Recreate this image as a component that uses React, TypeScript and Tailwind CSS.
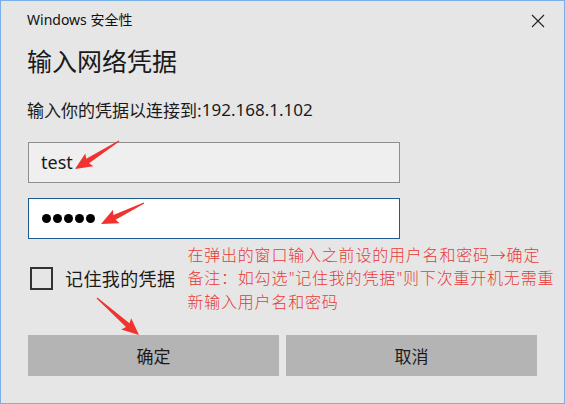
import React from "react";

const ui = { fontFamily: '"Noto Sans", "Noto Sans CJK SC", sans-serif' };
const cjk = { fontFamily: '"Noto Sans CJK SC", "Noto Sans", sans-serif' };

type Pt = [number, number];

function arrowPoints(from: Pt, to: Pt) {
  const dx = to[0] - from[0];
  const dy = to[1] - from[1];
  const len = Math.hypot(dx, dy);
  const ux = dx / len;
  const uy = dy / len;
  const nx = -uy;
  const ny = ux;
  const head = 15;
  const bx = to[0] - ux * head;
  const by = to[1] - uy * head;
  const p = (x: number, y: number, w: number) => `${x + nx * w},${y + ny * w}`;
  return [
    p(from[0], from[1], 0.6),
    p(bx, by, 2.6),
    p(bx - ux * 2, by - uy * 2, 7.5),
    `${to[0]},${to[1]}`,
    p(bx - ux * 2, by - uy * 2, -7.5),
    p(bx, by, -2.6),
    p(from[0], from[1], -0.6),
  ].join(" ");
}

const arrows: [Pt, Pt][] = [
  [[118, 140], [74, 168]],
  [[143, 202], [100, 223]],
  [[96, 297], [138, 334]],
];

function Quote() {
  return <span className="inline-block w-[7px] tracking-normal text-center" style={ui}>"</span>;
}

export default function App() {
  return (
    <div className="relative w-[565px] h-[404px] overflow-hidden border border-[#7ab0e8] bg-[#e6e6e6] text-[#1a1a1a]" style={ui}>
      <div className="flex items-center justify-between h-[38px] pl-[26px] pr-[19px]">
        <span className="text-[14px] leading-none text-[#111]">Windows 安全性</span>
        <svg width="14" height="14" viewBox="0 0 14 14" className="mt-[2px]">
          <path d="M1 1 L13 13 M13 1 L1 13" stroke="#222" strokeWidth="1.1" />
        </svg>
      </div>

      <div className="px-[26px]">
        <h1 className="mt-[4px] h-[34px] flex items-center text-[25px] leading-none" style={cjk}>
          输入网络凭据
        </h1>
        <p className="mt-[21px] h-[22px] flex items-center text-[17px] leading-none">
          <span style={cjk}>输入你的凭据以连接到:</span>192.168.1.102
        </p>

        <div className="mt-[22px] ml-[1px] w-[372px] h-[41px] border border-[#8f8f8f] bg-[#efefef] flex items-center pl-[12px] text-[18px]">
          test
        </div>
        <div className="mt-[15px] ml-[1px] w-[372px] h-[41px] border border-[#1e5c8f] bg-white flex items-center pl-[13px] gap-[2px]">
          {[0, 1, 2, 3, 4].map((i) => (
            <span key={i} className="block w-[9px] h-[9px] rounded-full bg-black" />
          ))}
        </div>

        <div className="mt-[4px] flex items-center h-[70px]">
          <div className="shrink-0 ml-[3px] w-[23px] h-[23px] border-2 border-[#333]" />
          <span className="shrink-0 whitespace-nowrap ml-[12px] text-[18px] leading-none tracking-[0.4px]" style={cjk}>
            记住我的凭据
          </span>
          <div
            lang="zh-CN"
            className="shrink-0 ml-[12px] text-[16px] leading-[23px] tracking-[0.8px] text-[#e63a36] font-light whitespace-nowrap"
            style={cjk}
          >
            <div>在弹出的窗口输入之前设的用户名和密码→确定</div>
            <div>
              备注：如勾选<Quote />记住我的凭据<Quote />则下次重开机无需重
            </div>
            <div>新输入用户名和密码</div>
          </div>
        </div>

        <div className="mt-[22px] ml-[1px] flex gap-[7px]">
          <button className="w-[251px] h-[41px] bg-[#b4b4b4] text-[17px]" style={cjk}>
            确定
          </button>
          <button className="w-[251px] h-[41px] bg-[#b4b4b4] text-[17px]" style={cjk}>
            取消
          </button>
        </div>
      </div>

      <svg className="absolute inset-0 pointer-events-none" width="565" height="404">
        {arrows.map(([a, b], i) => (
          <polygon key={i} points={arrowPoints(a, b)} fill="#f0332e" />
        ))}
      </svg>
    </div>
  );
}
